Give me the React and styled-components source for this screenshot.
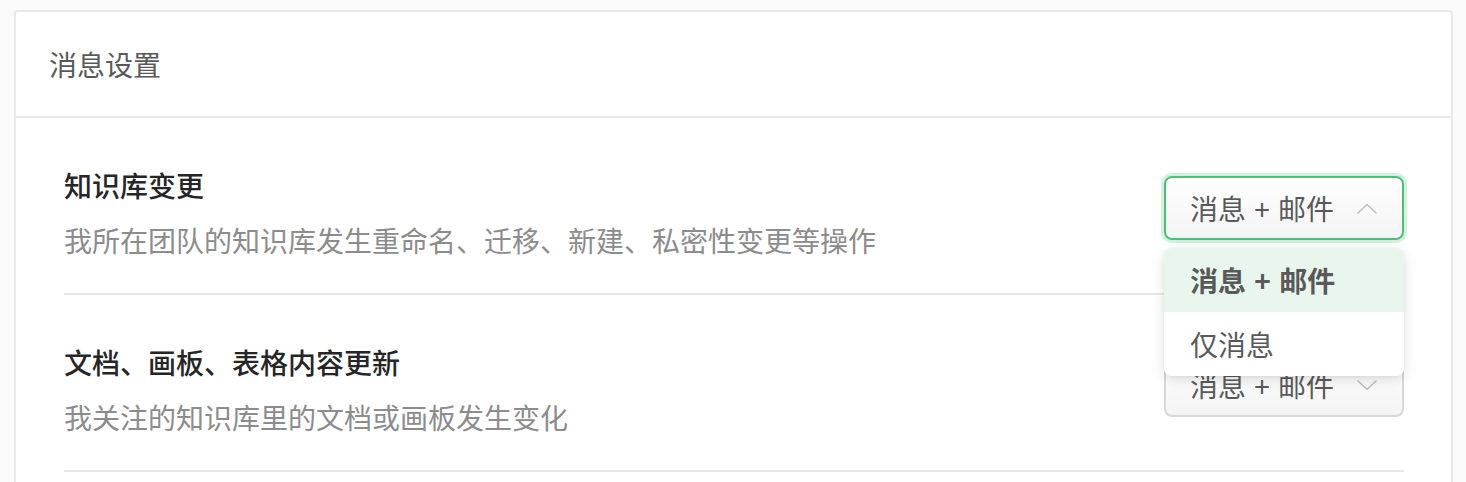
import React from "react";
import styled, { createGlobalStyle } from "styled-components";

const Global = createGlobalStyle`
  html, body { margin: 0; padding: 0; background: #fafafa; }
  body { font-family: "Noto Sans CJK SC", "Noto Sans", sans-serif; }
  * { box-sizing: border-box; }
`;

const Page = styled.div`
  padding: 10px 13px 0 14px;
  height: 482px;
  overflow: hidden;
`;

const Card = styled.section`
  background: #fff;
  border: 2px solid #e8e8e8;
  border-radius: 4px;
  min-height: 520px;
`;

const Header = styled.header`
  padding: 31px 33px;
  border-bottom: 2px solid #e8e8e8;
  font-size: 28px;
  line-height: 42px;
  color: #595959;
`;

const Body = styled.div`
  padding: 0 47px 0 48px;
`;

const Row = styled.div`
  position: relative;
  z-index: ${(p) => p.$layer};
  display: flex;
  justify-content: space-between;
  align-items: flex-start;
  padding: 46px 0 32px;
  border-bottom: 2px solid #e8e8e8;
`;

const Info = styled.div`
  display: flex;
  flex-direction: column;
  gap: 13px;
`;

const Title = styled.div`
  font-size: 28px;
  line-height: 42px;
  font-weight: 500;
  color: #262626;
`;

const Desc = styled.div`
  font-size: 28px;
  line-height: 42px;
  color: #8c8c8c;
`;

const SelectWrap = styled.div`
  position: relative;
  margin-top: 12px;
  width: 240px;
`;

const SelectBox = styled.div`
  height: 64px;
  display: flex;
  align-items: center;
  justify-content: space-between;
  padding: 0 25px 0 24px;
  border-radius: 8px;
  border: 2px solid ${(p) => (p.$open ? "#4cbf78" : "#d9d9d9")};
  box-shadow: ${(p) => (p.$open ? "0 0 0 3px #d3f0dc" : "none")};
  background: linear-gradient(#ffffff, #f4f4f4);
  font-size: 28px;
  word-spacing: 2px;
  color: #595959;
`;

const Chevron = styled.svg`
  width: 20px;
  height: 11px;
  flex: none;
`;

const Menu = styled.ul`
  position: absolute;
  left: 0;
  right: 0;
  top: 72px;
  margin: 0;
  padding: 0;
  list-style: none;
  background: #fff;
  border-radius: 8px;
  overflow: hidden;
  box-shadow: 0 4px 14px rgba(0, 0, 0, 0.12), 0 1px 3px rgba(0, 0, 0, 0.06);
  z-index: 2;
`;

const MenuItem = styled.li`
  height: 64px;
  display: flex;
  align-items: center;
  padding: 0 26px;
  font-size: 28px;
  word-spacing: 2px;
  color: #595959;
  font-weight: ${(p) => (p.$active ? 600 : 400)};
  background: ${(p) => (p.$active ? "#e9f6ed" : "#fff")};
`;

function Select({ value, open, options = [] }) {
  return (
    <SelectWrap>
      <SelectBox $open={open}>
        <span>{value}</span>
        <Chevron viewBox="0 0 20 11" fill="none">
          <path
            d={open ? "M1 10 L10 1.5 L19 10" : "M1 1 L10 9.5 L19 1"}
            stroke="#bfbfbf"
            strokeWidth="1.6"
            strokeLinecap="round"
            strokeLinejoin="round"
          />
        </Chevron>
      </SelectBox>
      {open && (
        <Menu>
          {options.map((o) => (
            <MenuItem key={o} $active={o === value}>
              {o}
            </MenuItem>
          ))}
        </Menu>
      )}
    </SelectWrap>
  );
}

const rows = [
  {
    title: "知识库变更",
    desc: "我所在团队的知识库发生重命名、迁移、新建、私密性变更等操作",
    open: true,
  },
  {
    title: "文档、画板、表格内容更新",
    desc: "我关注的知识库里的文档或画板发生变化",
    open: false,
  },
];

export default function App() {
  return (
    <>
      <Global />
      <Page>
        <Card>
          <Header>消息设置</Header>
          <Body>
            {rows.map((r, i) => (
              <Row key={i} $layer={rows.length - i}>
                <Info>
                  <Title>{r.title}</Title>
                  <Desc>{r.desc}</Desc>
                </Info>
                <Select value="消息 + 邮件" open={r.open} options={["消息 + 邮件", "仅消息"]} />
              </Row>
            ))}
          </Body>
        </Card>
      </Page>
    </>
  );
}
